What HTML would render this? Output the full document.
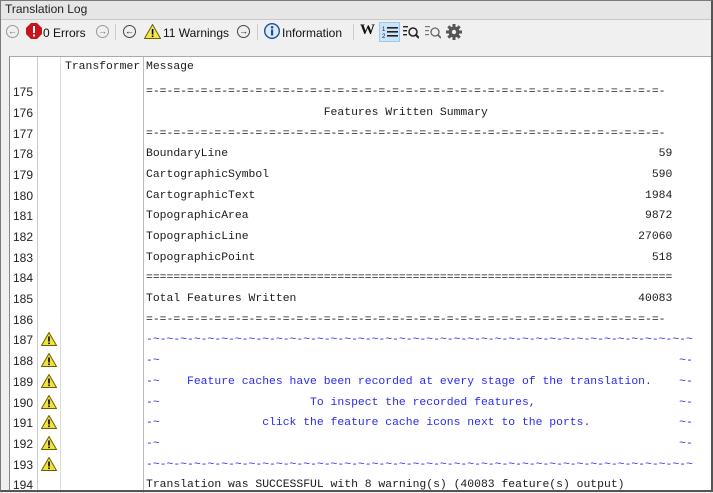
<!DOCTYPE html>
<html><head><meta charset="utf-8"><style>
*{margin:0;padding:0;box-sizing:border-box}
body{width:713px;height:492px;background:#f0f0f0;font-family:"Liberation Sans",sans-serif;position:relative;overflow:hidden}
.title{position:absolute;left:0;top:0;width:713px;height:20px;background:#e6e6e6;border-bottom:1px solid #c8c8c8;font-size:12px;line-height:19px;padding-left:5px;color:#222}
.win{position:absolute;left:0;top:0;width:713px;height:492px;border:1px solid #7a7a7a;border-right:2px solid #555;border-bottom:2px solid #555;pointer-events:none}
.tb{position:absolute;top:21px;left:0;height:24px;width:713px;font-size:12px;color:#111}
.tb span{position:absolute;top:4px;line-height:16px}
.circ{position:absolute;top:25px;width:13px;height:13px;border-radius:50%;border:1px solid #999;font-size:9px;line-height:11px;text-align:center;color:#666}
.circ.on{border-color:#444;color:#111}
.sep{position:absolute;top:24px;width:1px;height:16px;background:#ccc}
.panel{position:absolute;left:9px;top:56px;width:702px;height:436px;background:#fff;border-left:1px solid #888;border-top:1px solid #aaa}
.vl{position:absolute;width:1px;background:#ccc}
.mono{font-family:"Liberation Mono",monospace;font-size:11.4px;white-space:pre;position:absolute;line-height:14px;color:#1a1a1a}
.num{position:absolute;left:13px;font-size:12px;color:#222;line-height:14px}
.mono.blue{color:#2a2af0}
.w{position:absolute;left:41px;width:16px;height:14px}
</style></head><body>
<div class="title">Translation Log</div>
<div class="circ" style="left:6px">&#8592;</div>
<svg style="position:absolute;left:26px;top:23px" width="16" height="16"><polygon points="5,0 11,0 16,5 16,11 11,16 5,16 0,11 0,5" fill="#c8151b"/><rect x="7" y="3" width="2" height="7" fill="#fff"/><rect x="7" y="11.5" width="2" height="2" fill="#fff"/></svg>
<div class="tb"><span style="left:43px">0 Errors</span><span style="left:163px">11 Warnings</span><span style="left:282px">Information</span></div>
<div class="circ" style="left:96px">&#8594;</div>
<div class="sep" style="left:115px"></div>
<div class="circ on" style="left:123px">&#8592;</div>
<svg style="position:absolute;left:144px;top:24px" width="17" height="15"><polygon points="8.5,0.5 16.5,14.5 0.5,14.5" fill="#f3e84a" stroke="#6b6000"/><rect x="7.8" y="5" width="1.6" height="5.5" fill="#000"/><rect x="7.8" y="11.5" width="1.6" height="1.6" fill="#000"/></svg>
<div class="circ on" style="left:237px">&#8594;</div>
<div class="sep" style="left:257px"></div>
<svg style="position:absolute;left:264px;top:23px" width="17" height="17"><circle cx="8" cy="8" r="7.3" fill="#dfe9f7" stroke="#1a4f9c" stroke-width="1.4"/><rect x="7" y="6.5" width="2.2" height="6" fill="#1a4f9c"/><circle cx="8.1" cy="4.3" r="1.3" fill="#1a4f9c"/></svg>
<div class="sep" style="left:353px"></div>
<div style="position:absolute;left:360px;top:22px;font:bold 15px 'Liberation Serif',serif;color:#111">W</div>
<div style="position:absolute;left:379px;top:22px;width:21px;height:20px;background:#cce4f7;border:1px solid #99c9ef"></div>
<svg style="position:absolute;left:382px;top:25px" width="16" height="14"><rect x="5" y="2" width="11" height="1.6" fill="#222"/><rect x="5" y="6" width="11" height="1.6" fill="#222"/><rect x="5" y="10" width="11" height="1.6" fill="#222"/><text x="0" y="6" font-size="6" fill="#222">1</text><text x="0" y="13" font-size="6" fill="#222">2</text></svg>
<svg style="position:absolute;left:403px;top:24px" width="16" height="16"><rect x="0" y="2" width="5" height="1.4" fill="#222"/><rect x="0" y="6" width="4" height="1.4" fill="#222"/><rect x="0" y="10" width="4" height="1.4" fill="#222"/><circle cx="10" cy="8" r="4" fill="none" stroke="#222" stroke-width="1.5"/><line x1="13" y1="11" x2="16" y2="14" stroke="#222" stroke-width="2"/></svg>
<svg style="position:absolute;left:425px;top:24px" width="16" height="16"><rect x="0" y="2" width="5" height="1.2" fill="#777"/><rect x="0" y="6" width="4" height="1.2" fill="#777"/><rect x="0" y="10" width="4" height="1.2" fill="#777"/><circle cx="10" cy="8" r="4" fill="none" stroke="#666" stroke-width="1.3"/><line x1="13" y1="11" x2="16" y2="14" stroke="#666" stroke-width="1.8"/></svg>
<svg style="position:absolute;left:446px;top:24px" width="16" height="16" viewBox="0 0 16 16"><g fill="#555"><circle cx="8" cy="8" r="5.5"/><rect x="6.5" y="0" width="3" height="16"/><rect x="0" y="6.5" width="16" height="3"/><rect x="6.5" y="0" width="3" height="16" transform="rotate(45 8 8)"/><rect x="6.5" y="0" width="3" height="16" transform="rotate(-45 8 8)"/></g><circle cx="8" cy="8" r="2.2" fill="#f0f0f0"/></svg>

<div class="panel">
<div class="vl" style="left:27px;top:0;height:436px"></div>
<div class="vl" style="left:50px;top:0;height:436px;background:#ddd"></div>
<div class="vl" style="left:133px;top:0;height:436px;background:#bbb"></div>
</div>
<div class="mono" style="left:65px;top:60px">Transformer</div>
<div class="mono" style="left:146px;top:60px">Message</div>

<div class="num" style="top:85px">175</div><div class="mono" style="left:146px;top:85px">=-=-=-=-=-=-=-=-=-=-=-=-=-=-=-=-=-=-=-=-=-=-=-=-=-=-=-=-=-=-=-=-=-=-=-=-=-=-</div>
<div class="num" style="top:106px">176</div><div class="mono" style="left:146px;top:106px">                          Features Written Summary</div>
<div class="num" style="top:127px">177</div><div class="mono" style="left:146px;top:127px">=-=-=-=-=-=-=-=-=-=-=-=-=-=-=-=-=-=-=-=-=-=-=-=-=-=-=-=-=-=-=-=-=-=-=-=-=-=-</div>
<div class="num" style="top:147px">178</div><div class="mono" style="left:146px;top:147px">BoundaryLine                                                               59</div>
<div class="num" style="top:168px">179</div><div class="mono" style="left:146px;top:168px">CartographicSymbol                                                        590</div>
<div class="num" style="top:189px">180</div><div class="mono" style="left:146px;top:189px">CartographicText                                                         1984</div>
<div class="num" style="top:209px">181</div><div class="mono" style="left:146px;top:209px">TopographicArea                                                          9872</div>
<div class="num" style="top:230px">182</div><div class="mono" style="left:146px;top:230px">TopographicLine                                                         27060</div>
<div class="num" style="top:251px">183</div><div class="mono" style="left:146px;top:251px">TopographicPoint                                                          518</div>
<div class="num" style="top:271px">184</div><div class="mono" style="left:146px;top:271px">=============================================================================</div>
<div class="num" style="top:292px">185</div><div class="mono" style="left:146px;top:292px">Total Features Written                                                  40083</div>
<div class="num" style="top:313px">186</div><div class="mono" style="left:146px;top:313px">=-=-=-=-=-=-=-=-=-=-=-=-=-=-=-=-=-=-=-=-=-=-=-=-=-=-=-=-=-=-=-=-=-=-=-=-=-=-</div>
<div class="num" style="top:333px">187</div><div class="mono blue" style="left:146px;top:333px">-~-~-~-~-~-~-~-~-~-~-~-~-~-~-~-~-~-~-~-~-~-~-~-~-~-~-~-~-~-~-~-~-~-~-~-~-~-~-~-~</div>
<div class="num" style="top:354px">188</div><div class="mono blue" style="left:146px;top:354px">-~                                                                            ~-</div>
<div class="num" style="top:375px">189</div><div class="mono blue" style="left:146px;top:375px">-~    Feature caches have been recorded at every stage of the translation.    ~-</div>
<div class="num" style="top:396px">190</div><div class="mono blue" style="left:146px;top:396px">-~                      To inspect the recorded features,                     ~-</div>
<div class="num" style="top:416px">191</div><div class="mono blue" style="left:146px;top:416px">-~               click the feature cache icons next to the ports.             ~-</div>
<div class="num" style="top:437px">192</div><div class="mono blue" style="left:146px;top:437px">-~                                                                            ~-</div>
<div class="num" style="top:458px">193</div><div class="mono blue" style="left:146px;top:458px">-~-~-~-~-~-~-~-~-~-~-~-~-~-~-~-~-~-~-~-~-~-~-~-~-~-~-~-~-~-~-~-~-~-~-~-~-~-~-~-~</div>
<div class="num" style="top:478px">194</div><div class="mono" style="left:146px;top:478px">Translation was SUCCESSFUL with 8 warning(s) (40083 feature(s) output)</div>

<svg class="w" style="top:332px" viewBox="0 0 16 14"><polygon points="8,0.5 15.5,13.5 0.5,13.5" fill="#f0e040" stroke="#6b6000"/><rect x="7.2" y="4.5" width="1.6" height="5" fill="#000"/><rect x="7.2" y="10.5" width="1.6" height="1.6" fill="#000"/></svg>
<svg class="w" style="top:353px" viewBox="0 0 16 14"><polygon points="8,0.5 15.5,13.5 0.5,13.5" fill="#f0e040" stroke="#6b6000"/><rect x="7.2" y="4.5" width="1.6" height="5" fill="#000"/><rect x="7.2" y="10.5" width="1.6" height="1.6" fill="#000"/></svg>
<svg class="w" style="top:374px" viewBox="0 0 16 14"><polygon points="8,0.5 15.5,13.5 0.5,13.5" fill="#f0e040" stroke="#6b6000"/><rect x="7.2" y="4.5" width="1.6" height="5" fill="#000"/><rect x="7.2" y="10.5" width="1.6" height="1.6" fill="#000"/></svg>
<svg class="w" style="top:395px" viewBox="0 0 16 14"><polygon points="8,0.5 15.5,13.5 0.5,13.5" fill="#f0e040" stroke="#6b6000"/><rect x="7.2" y="4.5" width="1.6" height="5" fill="#000"/><rect x="7.2" y="10.5" width="1.6" height="1.6" fill="#000"/></svg>
<svg class="w" style="top:415px" viewBox="0 0 16 14"><polygon points="8,0.5 15.5,13.5 0.5,13.5" fill="#f0e040" stroke="#6b6000"/><rect x="7.2" y="4.5" width="1.6" height="5" fill="#000"/><rect x="7.2" y="10.5" width="1.6" height="1.6" fill="#000"/></svg>
<svg class="w" style="top:436px" viewBox="0 0 16 14"><polygon points="8,0.5 15.5,13.5 0.5,13.5" fill="#f0e040" stroke="#6b6000"/><rect x="7.2" y="4.5" width="1.6" height="5" fill="#000"/><rect x="7.2" y="10.5" width="1.6" height="1.6" fill="#000"/></svg>
<svg class="w" style="top:457px" viewBox="0 0 16 14"><polygon points="8,0.5 15.5,13.5 0.5,13.5" fill="#f0e040" stroke="#6b6000"/><rect x="7.2" y="4.5" width="1.6" height="5" fill="#000"/><rect x="7.2" y="10.5" width="1.6" height="1.6" fill="#000"/></svg>
<div class="win"></div>
</body></html>
